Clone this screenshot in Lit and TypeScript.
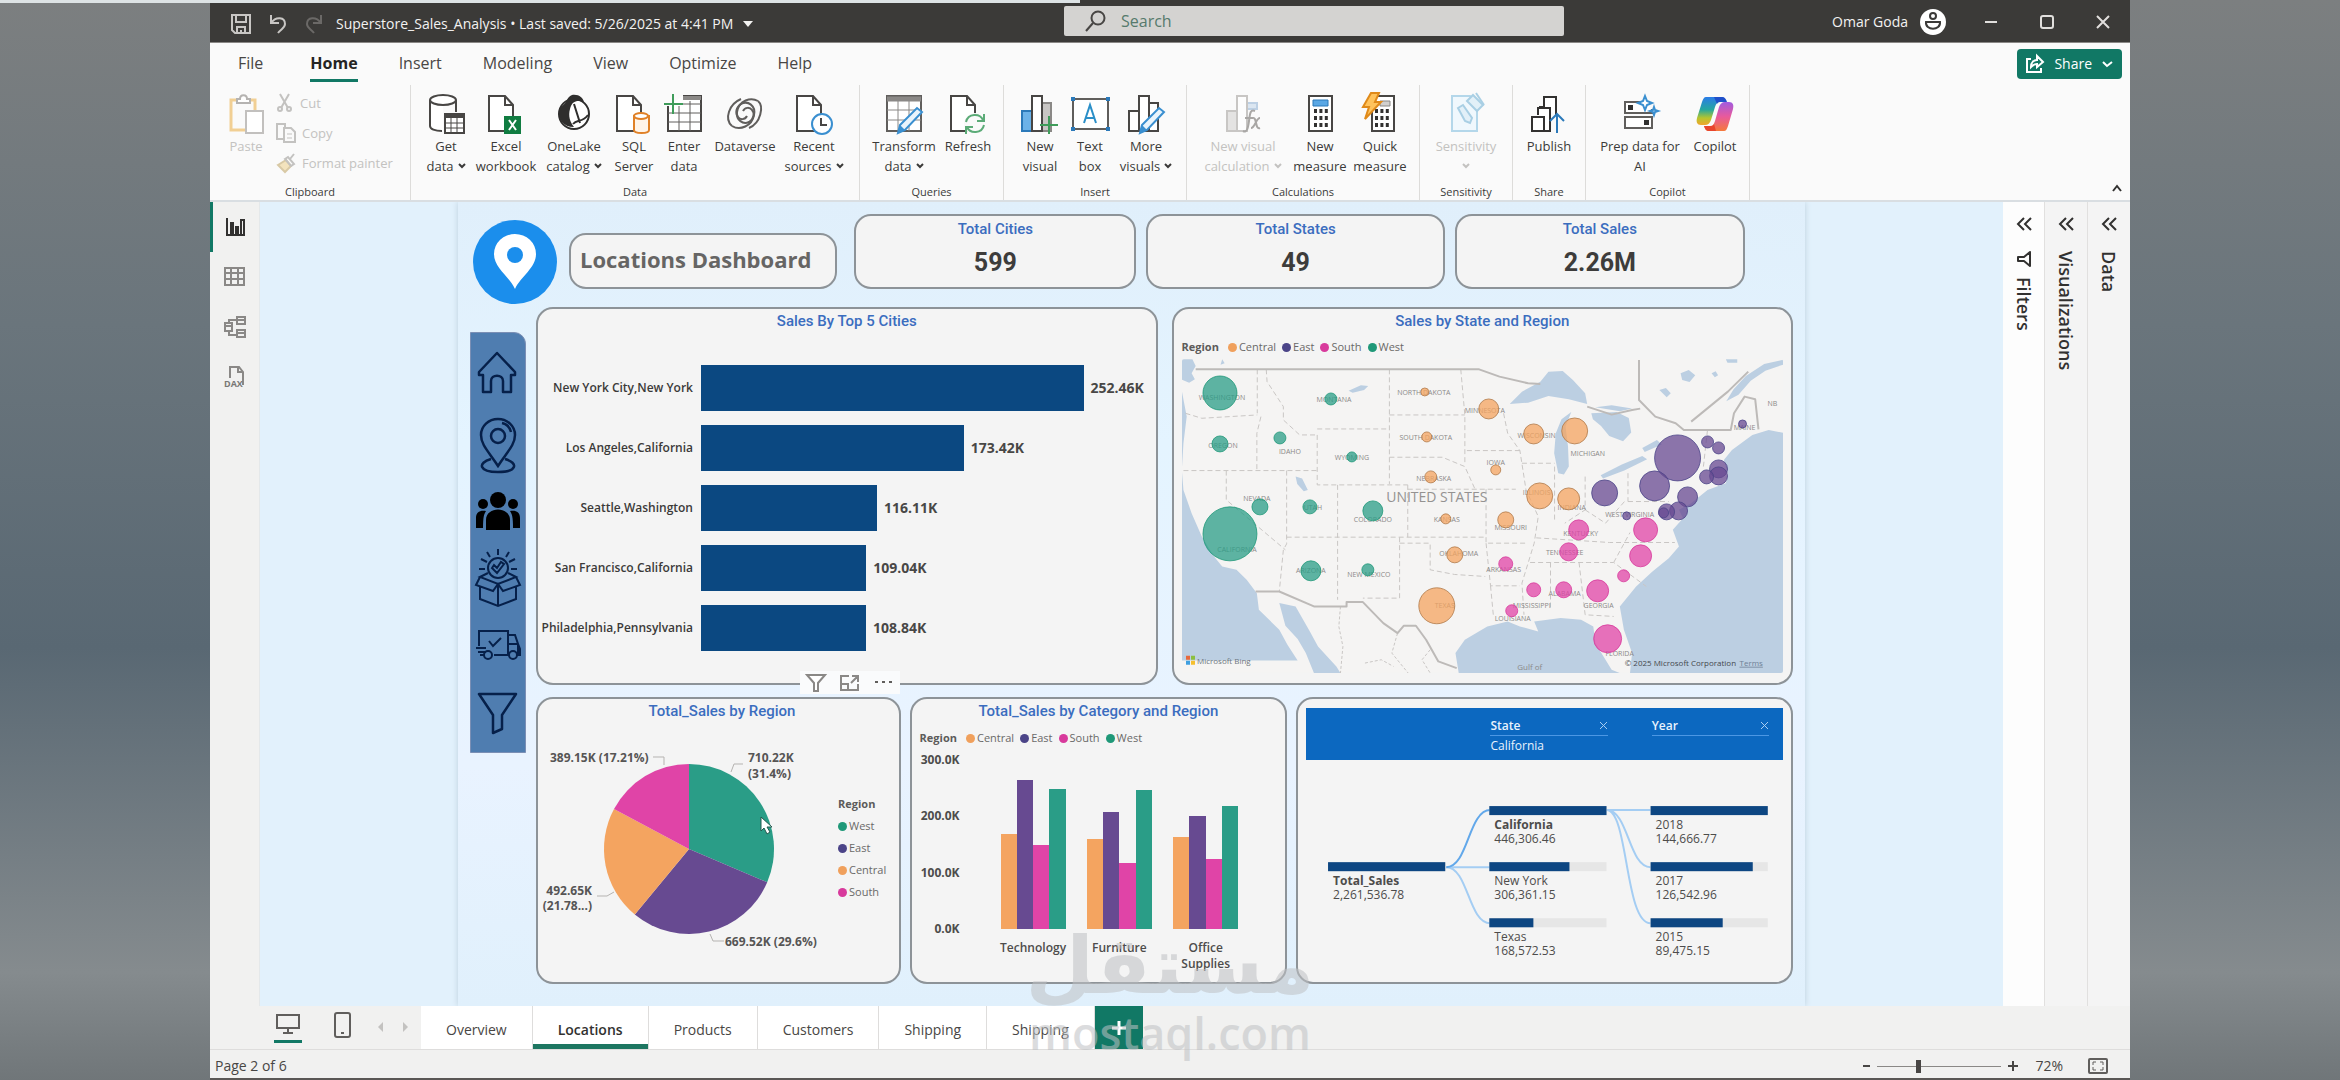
import { LitElement, html, svg, css, type TemplateResult, type SVGTemplateResult } from "lit";
import { customElement } from "lit/decorators.js";
import { classMap } from "lit/directives/class-map.js";

type Art = SVGTemplateResult;
const icon = (w: number, h: number, art: Art | Art[], cls = "") =>
  html`<svg class="ico ${cls}" width=${w} height=${h} viewBox="0 0 ${w} ${h}" aria-hidden="true">${art}</svg>`;

const REGION: Record<string, string> = { Central: "#f4a460", East: "#674a91", South: "#e044a7", West: "#2a9d87" };
const DOT: Record<string, string> = { Central: "#f0a05c", East: "#4b4488", South: "#d83a9c", West: "#1f9878" };

/* ---------- ribbon artwork, 40 x 44 ---------- */
const doc = svg`<path d="M3 4h16l8 9v26H3z" fill="#fff" stroke="#484644" stroke-width="2"/><path d="M19 4v9h8" fill="none" stroke="#484644" stroke-width="2"/>`;
const pencil = svg`<path d="M16 33l17-17 5 4-17 18-7 3z" fill="#e9f4fc" stroke="#3a8fd0" stroke-width="2"/><path d="M16 33l5 5-7 3z" fill="#3a8fd0"/>`;
const art: Record<string, Art> = {
  paste: svg`<path d="M9 8H3v30h14M21 8h6v10" fill="none" stroke="#f1cf94" stroke-width="3"/><path d="M9 11V7h3c0-5 7-5 7 0h3v4z" fill="#fff" stroke="#b5b3b1" stroke-width="2"/><path d="M18 19h17v22H18z" fill="#fff" stroke="#c2c0be" stroke-width="2"/>`,
  getdata: svg`<path d="M4 8v26c0 3 6 5 13 5V8z" fill="#fff"/><ellipse cx="17" cy="8" rx="13" ry="5" fill="#fff" stroke="#484644" stroke-width="2"/><path d="M4 8v26c0 3 5 5 12 5M30 8v12" fill="none" stroke="#484644" stroke-width="2"/><path d="M19 22h19v19H19z" fill="#fff" stroke="#484644" stroke-width="2"/><path d="M19 24h19" stroke="#484644" stroke-width="4"/><path d="M19 31h19M19 36h19M25 26v15M31 26v15" stroke="#484644"/>`,
  excel: svg`${doc}<path d="M18 24h17v18H18z" fill="#107c41"/><path d="M23 28l7 10M30 28l-7 10" stroke="#fff" stroke-width="2"/>`,
  onelake: svg`<circle cx="20" cy="22" r="15" fill="#fff" stroke="#2f2e2d" stroke-width="2"/><path d="M18 3c7-1 11 3 12 7-7-2-12-1-14 7-2 7 0 13 4 18C9 35 4 27 5 19 6 14 12 12 13 8c1-2 2-4 5-5z" fill="#2f2e2d"/><path d="M20 12l6 19M19 32c4-5 9-1 15-9" fill="none" stroke="#2f2e2d" stroke-width="2"/>`,
  sql: svg`${doc}<path d="M20 24v14c0 4 15 4 15 0V24z" fill="#fff4e8" stroke="#e08127" stroke-width="2"/><ellipse cx="27" cy="24" rx="7" ry="3" fill="#fff" stroke="#e08127" stroke-width="2"/>`,
  enter: svg`<path d="M4 14v25h33V4H19" fill="#fff" stroke="#484644" stroke-width="2"/><path d="M19 6h18" stroke="#8a8886" stroke-width="4"/><path d="M4 21h33M4 30h33M15 14v25M26 9v30M19 12h18" stroke="#605e5c"/><path d="M9 2v20M0 12h19" stroke="#3f9c5a" stroke-width="2"/>`,
  dataverse: svg`<g fill="none" stroke="#605e5c" stroke-width="2"><path d="M33 9C26 5 14 8 12 20c-1 8 6 13 12 10 5-3 6-9 3-12-2-3-7-3-9 1"/><path d="M7 34c8 5 20 0 22-11 2-9-6-15-13-11-5 3-6 9-3 13 2 3 7 3 9-1"/><path d="M33 9c6 5 3 22-9 27M7 34C-1 27 4 12 16 7"/></g>`,
  recent: svg`${doc}<circle cx="28" cy="32" r="10" fill="#fff" stroke="#3a8fd0" stroke-width="2"/><path d="M27 26v7h6" fill="none" stroke="#484644" stroke-width="2"/>`,
  transform: svg`<path d="M3 4h34v35H3z" fill="#fff" stroke="#605e5c" stroke-width="2"/><path d="M3 7h34" stroke="#8a8886" stroke-width="5"/><path d="M3 18h34M3 28h34M14 9v30M25 9v30" stroke="#8a8886"/>${pencil}`,
  refresh: svg`${doc}<circle cx="27" cy="32" r="11" fill="#fafafa"/><path d="M18 30c2-9 14-9 17-2M36 22v7h-7M36 33c-2 9-14 9-17 2M18 42v-7h7" fill="none" stroke="#5bab77" stroke-width="2"/>`,
  newvisual: svg`<path d="M2 19h10v20H2z" fill="#6cb2e8" stroke="#2b79b9" stroke-width="2"/><path d="M22 11h9v28h-9z" fill="#c8c6c4" stroke="#8a8886" stroke-width="2"/><path d="M12 4h10v35H12z" fill="#fff" stroke="#484644" stroke-width="2"/><path d="M29 24v18M20 33h18" stroke="#3f9c5a" stroke-width="2"/>`,
  textbox: svg`<path d="M3 7h35v30H3z" fill="#fff" stroke="#605e5c" stroke-width="2"/><path d="M14 31l6-18 6 18M16 26h8" fill="none" stroke="#2b8fc8" stroke-width="2"/><path d="M1 5h4v4H1zM36 5h4v4h-4zM1 35h4v4H1zM36 35h4v4h-4z" fill="#2b79b9"/>`,
  morevisuals: svg`<path d="M3 19h10v20H3zM23 11h9v28h-9z" fill="#fff" stroke="#484644" stroke-width="2"/><path d="M13 4h10v35H13z" fill="#fff" stroke="#484644" stroke-width="2"/>${pencil}`,
  viscalc: svg`<path d="M4 19h10v20H4z" fill="#e4e3e2" stroke="#c8c6c4" stroke-width="2"/><path d="M24 11h10v6H24z" fill="#dbe6f1" stroke="#bdd0e4" stroke-width="2"/><path d="M14 4h10v35H14z" fill="#fdfdfd" stroke="#c8c6c4" stroke-width="2"/><path d="M32 19c-5-2-5 3-6 10s-2 12-6 10M22 26h8M30 26c4-1 2 12 7 10M37 26c-4 0-5 10-9 10" fill="none" stroke="#a9a7a5" stroke-width="2"/>`,
  measure: svg`<path d="M9 4h23v35H9z" fill="#fff" stroke="#484644" stroke-width="2"/><path d="M13 8h15v6H13z" fill="#5aa7e4" stroke="#2b79b9"/><path d="M14 19h14M14 26h14M14 33h14" stroke="#323130" stroke-width="4" stroke-dasharray="3 2.4"/>`,
  quick: svg`<path d="M14 4h20v35H12V14" fill="#fff" stroke="#484644" stroke-width="2"/><path d="M20 9h10v5H20z" fill="#d2d0ce" stroke="#8a8886"/><path d="M15 19h15M15 26h15M15 33h15" stroke="#323130" stroke-width="4" stroke-dasharray="3 2.4"/><path d="M11 1h8l-4 9h6L5 27l4-12H3z" fill="#ffc35c" stroke="#e08a1a" stroke-width="2"/>`,
  sensitivity: svg`<path d="M6 4h18l7 10v25H6z" fill="#f0f8fd" stroke="#b4d7ea" stroke-width="2"/><path d="M12 16l5-3 9 13-2 5-5-2zM21 9l6-6 10 10-6 6z" fill="#e2f0f8" stroke="#a9cfe4" stroke-width="2"/><path d="M30 1l8 12" stroke="#a9cfe4" stroke-width="2"/>`,
  publish: svg`<g fill="#fff" stroke="#323130" stroke-width="2"><path d="M15 15V5h12v18M15 15h-4v8"/><path d="M9 23v-7h12v23H9"/><path d="M3 25h12v14H3z"/></g><path d="M28 41V22M21 29l7-7 7 7" fill="none" stroke="#2b79b9" stroke-width="2"/>`,
  prep: svg`<path d="M22 10H5v11h27v-4" fill="#fff" stroke="#605e5c" stroke-width="2"/><path d="M5 25h27v11H5z" fill="#fff" stroke="#605e5c" stroke-width="2"/><path d="M8 13h5v5H8zM24 28h5v5h-5z" fill="#323130"/><path d="M25 4l2 5 5 2-5 2-2 5-2-5-5-2 5-2zM34 15l1 3 3 1-3 1-1 3-1-3-3-1 3-1z" fill="#fff" stroke="#3a8fd0" stroke-width="2"/>`,
  copilot: svg`<defs><linearGradient id="cpa" x1="0" y1="0" x2="0" y2="1"><stop offset="0" stop-color="#2a7be8"/><stop offset=".45" stop-color="#24a7a0"/><stop offset=".75" stop-color="#b6c52e"/><stop offset="1" stop-color="#f2a52a"/></linearGradient><linearGradient id="cpb" x1="0" y1="0" x2="0" y2="1"><stop offset="0" stop-color="#a05be0"/><stop offset=".5" stop-color="#e85a9c"/><stop offset="1" stop-color="#f5793a"/></linearGradient></defs><path d="M11 5h15c3 0 4 2 5 5h-6c-3 0-4 2-5 5l-4 13c-1 3-3 5-6 5H6c-4 0-5-3-4-7l5-16c1-3 2-5 4-5z" fill="url(#cpa)"/><path d="M29 39H14c-3 0-4-2-5-5h6c3 0 4-2 5-5l4-14c1-3 3-5 6-5h4c4 0 5 3 4 7l-5 17c-1 3-2 5-4 5z" fill="url(#cpb)"/><path d="M19 5h8c3 0 4 2 5 5h-6c-2 0-3 0-4 2z" fill="#1f4fc9"/><path d="M21 39h-7c-3 0-4-2-5-5h6c2 0 3 0 4-2z" fill="#e8452c"/>`,
};

interface Tool { key: string; lines: string[]; w: number; caret?: boolean; off?: boolean }
const GROUPS: { name: string; w: number; tools: Tool[] }[] = [
  { name: "Data", w: 449, tools: [
    { key: "getdata", lines: ["Get", "data"], w: 60, caret: true },
    { key: "excel", lines: ["Excel", "workbook"], w: 60 },
    { key: "onelake", lines: ["OneLake", "catalog"], w: 76, caret: true },
    { key: "sql", lines: ["SQL", "Server"], w: 44 },
    { key: "enter", lines: ["Enter", "data"], w: 56 },
    { key: "dataverse", lines: ["Dataverse"], w: 66 },
    { key: "recent", lines: ["Recent", "sources"], w: 72, caret: true },
  ] },
  { name: "Queries", w: 144, tools: [
    { key: "transform", lines: ["Transform", "data"], w: 78, caret: true },
    { key: "refresh", lines: ["Refresh"], w: 50 },
  ] },
  { name: "Insert", w: 183, tools: [
    { key: "newvisual", lines: ["New", "visual"], w: 62 },
    { key: "textbox", lines: ["Text", "box"], w: 38 },
    { key: "morevisuals", lines: ["More", "visuals"], w: 74, caret: true },
  ] },
  { name: "Calculations", w: 233, tools: [
    { key: "viscalc", lines: ["New visual", "calculation"], w: 102, caret: true, off: true },
    { key: "measure", lines: ["New", "measure"], w: 52 },
    { key: "quick", lines: ["Quick", "measure"], w: 68 },
  ] },
  { name: "Sensitivity", w: 93, tools: [{ key: "sensitivity", lines: ["Sensitivity", ""], w: 82, caret: true, off: true }] },
  { name: "Share", w: 73, tools: [{ key: "publish", lines: ["Publish"], w: 62 }] },
  { name: "Copilot", w: 164, tools: [
    { key: "prep", lines: ["Prep data for", "AI"], w: 98 },
    { key: "copilot", lines: ["Copilot"], w: 52 },
  ] },
];

/* ---------- report data ---------- */
const CITIES: [string, number][] = [
  ["New York City,New York", 252.46],
  ["Los Angeles,California", 173.42],
  ["Seattle,Washington", 116.11],
  ["San Francisco,California", 109.04],
  ["Philadelphia,Pennsylvania", 108.84],
];
const CATEGORIES: { name: string[]; values: number[] }[] = [
  { name: ["Technology"], values: [169, 264, 149, 248] },
  { name: ["Furniture"], values: [160, 207, 117, 246] },
  { name: ["Office", "Supplies"], values: [164, 200, 124, 218] },
];
const PIE: [string, number][] = [["West", 31.4], ["East", 29.6], ["Central", 21.79], ["South", 17.21]];

const mx = (x: number) => Math.round(x / 2.45 - 21);
const my = (y: number) => Math.round(y / 3 - 159);

const BUBBLES: [string, number, number, number][] = [
  ["West", 145, 580, 17], ["West", 417, 598, 6], ["West", 292, 713, 6], ["West", 145, 733, 8],
  ["West", 469, 770, 5], ["West", 242, 920, 8], ["West", 366, 921, 7], ["West", 520, 934, 10],
  ["West", 168, 1001, 27], ["West", 367, 1113, 10], ["West", 506, 1109, 6],
  ["Central", 648, 577, 4], ["Central", 803, 628, 10], ["Central", 652, 711, 5], ["Central", 913, 702, 10],
  ["Central", 1014, 692, 13], ["Central", 661, 831, 6], ["Central", 820, 811, 5], ["Central", 928, 889, 13],
  ["Central", 1000, 897, 11], ["Central", 845, 960, 8], ["Central", 698, 956, 5], ["Central", 720, 1065, 8],
  ["Central", 675, 1217, 18],
  ["South", 1025, 990, 10], ["South", 999, 1056, 9], ["South", 1189, 991, 12], ["South", 1177, 1067, 11],
  ["South", 846, 1091, 7], ["South", 915, 1170, 7], ["South", 987, 1169, 8], ["South", 1071, 1174, 11],
  ["South", 1135, 1128, 6], ["South", 861, 1233, 6], ["South", 1094, 1317, 14],
  ["East", 1425, 672, 4], ["East", 1266, 774, 23], ["East", 1340, 727, 6], ["East", 1367, 743, 6],
  ["East", 1210, 859, 15], ["East", 1089, 878, 13], ["East", 1290, 890, 10], ["East", 1270, 934, 9],
  ["East", 1240, 936, 8], ["East", 1232, 938, 5], ["East", 1142, 948, 4], ["East", 1366, 808, 9],
  ["East", 1368, 828, 9], ["East", 1337, 830, 7],
];
const PLACES: [string, number, number][] = [
  ["WASHINGTON", 150, 592], ["MONTANA", 423, 598], ["NORTH DAKOTA", 645, 577], ["MINNESOTA", 795, 630],
  ["OREGON", 153, 736], ["IDAHO", 315, 754], ["WYOMING", 467, 770], ["SOUTH DAKOTA", 650, 711],
  ["WISCONSIN", 920, 705], ["MICHIGAN", 1047, 758], ["MAINE", 1430, 680], ["NB", 1500, 608],
  ["NEBRASKA", 670, 834], ["IOWA", 820, 787], ["NEVADA", 236, 893], ["UTAH", 372, 920],
  ["COLORADO", 520, 958], ["KANSAS", 700, 958], ["MISSOURI", 858, 980], ["ILLINOIS", 922, 877],
  ["INDIANA", 1006, 920], ["CALIFORNIA", 185, 1048], ["ARIZONA", 367, 1110], ["NEW MEXICO", 510, 1123],
  ["OKLAHOMA", 730, 1060], ["TEXAS", 697, 1215], ["ARKANSAS", 840, 1108], ["LOUISIANA", 862, 1254],
  ["MISSISSIPPI", 910, 1216], ["ALABAMA", 990, 1178], ["GEORGIA", 1073, 1216], ["FLORIDA", 1125, 1358],
  ["TENNESSEE", 990, 1055], ["KENTUCKY", 1030, 1000], ["WEST VIRGINIA", 1150, 942],
];
const WATER =
  "M49 478h28l8 20-10 22 8 18-14 10-20-10zM49 560l14 90-8 80-4 80 4 60 20 70 25 70 30 60 20 30 35 10 25 30 25 40 5 50 50 60 20 45 25 47H49z" +
  "M290 1210l40 10 35 75 20 45 45 60 10 20h-65l-20-60-20-42-30-40z" +
  "M730 1420l-8-60 23-40 55-40 50-15 30 15 45 15-10-30 65-10 50 5 30 20 5 50 20 40 20 40 20 10h25l5-60-20-70-10-70 40-60 40-45 40-40 25-35-15-50 25-35-10-25 30-20 40-40 45-20 5-30-10-40 20-30 50-45 40-15 60 15v725z" +
  "M855 612l30-37 45-30 20-30 35-2 25 27 30 40 5 32-45-14-50-10-50 20z" +
  "M968 700l14-42 24-22-14 44 6 60 2 60-12 24-14-4-10-60z" +
  "M1055 640l62-4 30 18 6 44-20 26-34-16-20-30-20-20zM1065 622l40-6 50 10-30 8z" +
  "M1078 826l52-32 50-26 12 10-56 34-52 24zM1180 744l36-24 12 14-42 22z" +
  "M1530 478l-51 14-45 36-30 40-18 36 30-20 30-42 36-30 48-20zM1274 520l20-10 16 16-14 20-18-6zM1350 520l10-6 6 12-8 6zM1222 570l16-6 12 16-10 12zM460 572l30-16 18 2-10 12-28 8zM330 830l16 6 14 34-10 4-16-22zM150 478l6 12-10 4zM1385 478h28v10h-24z";
const BORDERS =
  "M236 508v132M60 640l40 15 136-10M245 650l-10 50v112M55 812h328M258 508l2 37 40 75v40l40 45h43M383 687h177M383 705v150h222M560 508v344M560 645h185" +
  "M560 772h130l55 28 25 68M605 855v157M605 868h265M433 855v345M308 812v220l-8 18-10 125M308 1012h487M585 1012v183h-90M585 1030h75v80l60 14 75 6M160 812v88l145 150" +
  "M735 508l10 137v150M750 752h130M797 868v162h98M797 1030l11 128h72M808 1158l7 90M840 640l10 60 30 52 15 118 30 80-10 80-30 120 5 95M885 790h80M905 1088h205l80 72" +
  "M920 1014l180 14h160M955 1088v140M1025 1088l15 157 70 5M965 800v160M1040 830v100l-50 40M1145 905h100M1145 820v85M1040 930l50 40 50-70M1110 1088l40-90M1340 690l-10 110";
const COUNTRY =
  "M85 508h695l50 22 70 20 30 2M1045 620l60 24 50-14 20-4M1172 480v120l40 50 50 20 20 20h115l8-50 26-50 26 8 8 90M1300 665l90-90 50-60" +
  "M232 1175h58l85 45h80v-13h40l50 63 35 30 15-22h30l25 42 30 65 45 20";
const MEXICO = "M440 1220l-4 60 10 60-6 80M580 1300l-14 60 20 30 20 30M660 1350l-20 30 20 40M500 1390l40-10 30 20";

/* ---------- report navigation artwork ---------- */
const NAV: { label: string; art: Art; h: number }[] = [
  { label: "Home", h: 70, art: svg`<path d="M4 24L22 5l18 19v3h-4v17h-8V33c0-7-12-7-12 0v11H8V27H4z" fill="none" stroke="#06204a" stroke-width="2.5" stroke-linejoin="round"/>` },
  { label: "Locations", h: 73, art: svg`<g fill="none" stroke="#06204a" stroke-width="2.5"><path d="M23 48C14 34 6 27 6 17a17 16 0 0 1 34 0c0 10-8 17-17 31z"/><circle cx="23" cy="18" r="7"/><path d="M16 41c-14 4-12 13 7 13s21-9 7-13M27 5c5 1 8 5 9 9"/></g>` },
  { label: "Customers", h: 57, art: svg`<g fill="#000"><circle cx="23" cy="9" r="8"/><circle cx="8" cy="13" r="5"/><circle cx="38" cy="13" r="5"/><path d="M11 39V29c0-14 24-14 24 0v10zM1 37V27c0-6 4-8 10-7-2 3-3 6-3 17zM45 37V27c0-6-4-8-10-7 2 3 3 6 3 17z"/></g>` },
  { label: "Products", h: 78, art: svg`<g fill="none" stroke="#06204a" stroke-width="2"><circle cx="23" cy="20" r="10"/><path d="M17 20l5 5 7-9-3-2-4 6-3-3zM23 1v6M12 4l3 5M34 4l-3 5M6 11l6 3M40 11l-6 3M4 21h6M36 21h6"/><path d="M13 25l-8 4 18 7 18-7-8-4M5 29l-4 8 17 6 5-7 5 7 17-6-4-8M5 39v12l18 7 18-7V39M23 36v22"/></g>` },
  { label: "Shipping", h: 64, art: svg`<g fill="none" stroke="#06204a" stroke-width="2"><path d="M4 20V5h29v24H19M33 9h7l3 9v11M33 18h10l2 5v6h-4M1 22h10M3 26h8M5 29h4"/><circle cx="13" cy="29" r="4"/><circle cx="38" cy="29" r="4"/><path d="M14 15l4 5 8-8"/></g>` },
  { label: "Filter", h: 60, art: svg`<path d="M4 4h37L27 25v14l-9 4V25z" fill="none" stroke="#06204a" stroke-width="2.5" stroke-linejoin="round"/>` },
];

@customElement("app-root")
export class AppRoot extends LitElement {
  static styles = css`
    :host { display: flex; min-height: 100vh; box-sizing: border-box; padding: 0 210px; position: relative; overflow: hidden;
      font-family: "Open Sans", "Noto Sans", sans-serif; font-size: 14px; line-height: 20px; color: #3b3a39;
      background: linear-gradient(180deg, #7c7f80 0, #6a757c 30%, #596873 60%, #858b8e 90%, #707679 100%); }
    * { box-sizing: border-box; }
    button, input { font: inherit; color: inherit; border: 0; background: none; padding: 0; margin: 0; }
    button { cursor: pointer; }
    .ico { display: block; flex: none; overflow: visible; }
    .strip { position: absolute; left: 0; top: 0; width: 1080px; height: 3px; background: #dde3e5; }
    .window { flex: 1; min-width: 0; display: flex; flex-direction: column; background: #f1f1f0; border-bottom: 2px solid #5a5755; }

    .titlebar { height: 43px; background: #3b3a38; color: #f3f2f1; display: grid; grid-template-columns: 834fr 500fr 566fr; align-items: center; padding-left: 20px; border-bottom: 1px solid #8a8886; }
    .tleft { display: flex; align-items: center; gap: 16px; padding-top: 5px; }
    .fname { font-size: 14px; white-space: nowrap; display: flex; gap: 10px; align-items: center; margin-left: -4px; }
    .search { height: 30px; background: #d4d3d1; display: flex; align-items: center; gap: 14px; padding-left: 21px; border-radius: 2px; }
    .search input { flex: 1; min-width: 0; font-size: 16px; outline: 0; }
    .search input::placeholder { color: #567a6c; opacity: 1; }
    .tright { display: flex; justify-content: flex-end; align-items: center; padding-top: 2px; }
    .user { display: flex; align-items: center; gap: 12px; font-size: 14px; margin-right: 38px; }
    .winbtns { display: flex; gap: 42px; padding-right: 20px; }

    .ribbon { background: #fafafa; height: 159px; border-bottom: 2px solid #d9dee2; display: flex; flex-direction: column; }
    .menu { height: 42px; display: flex; align-items: center; gap: 41px; padding: 0 8px 0 28px; font-size: 16px; }
    .menu a { color: #484644; text-decoration: none; line-height: 32px; border-bottom: 3px solid transparent; }
    .menu a:first-child { margin-right: 6px; }
    .menu a.on { color: #252423; font-weight: 700; border-color: #117865; }
    .share { margin-left: auto; background: #117865; color: #fff; border-radius: 4px; height: 30px; display: flex; align-items: center; gap: 10px; padding: 0 9px; font-size: 14px; }
    .groups { flex: 1; display: flex; }
    .group { display: flex; flex-direction: column; justify-content: space-between; border-right: 1px solid #dddcda; padding: 7px 0 0 5px; }
    .group .tools { display: flex; align-items: flex-start; }
    .gname { font-size: 11px; line-height: 16px; text-align: center; margin-left: -5px; }
    .tool { flex: none; display: flex; flex-direction: column; align-items: center; white-space: nowrap; font-size: 13px; line-height: 20px; }
    .tool.off, .clip.off { color: #c3c2c0; }
    .clip .gname { color: #3b3a39; }
    .line { display: flex; align-items: center; gap: 4px; min-height: 20px; }
    .clip { width: 201px; }
    .clip .tools { padding-left: 13px; gap: 12px; }
    .small { display: flex; flex-direction: column; gap: 10px; padding-top: 1px; }
    .small button { display: flex; gap: 6px; align-items: center; font-size: 13px; line-height: 20px; color: #c3c2c0; }
    .collapse { margin: auto 8px 8px auto; }

    .main { flex: 1; display: flex; }
    .views { width: 50px; display: flex; flex-direction: column; align-items: center; background: #f1f1f0; border-right: 1px solid #e4e8ea; }
    .views button { width: 100%; height: 50px; display: flex; align-items: center; justify-content: center; }
    .views button.on { border-left: 3px solid #117865; }
    .canvas { flex: 1; min-width: 0; background: #e2f1fc; padding: 0 198px; }
    .page { background: linear-gradient(180deg, #e0effb, #e4f4ff 30%, #e9f3ff 70%, #e0f0fc); box-shadow: 0 0 6px #bccfdd; padding: 12px 12px 22px; min-height: 804px; clip-path: inset(0 -8px); }
    .top { display: grid; grid-template-columns: 84px 277fr 282fr 298fr 290fr; column-gap: 10px; height: 93px; padding: 0 48px 0 3px; }
    .pin { margin-top: 6px; display: block; }
    .box { background: #f4f4f4; border: 2px solid #8d9398; border-radius: 17px; }
    .name { margin: 19px 7px 0 2px; height: 56px; display: flex; align-items: center; padding: 0 0 4px 9px; font: 700 22px/30px "Open Sans", sans-serif; color: #666564; white-space: nowrap; }
    .kpi { height: 75px; text-align: center; padding-top: 3px; }
    .kpi h2, .card h2 { margin: 0; font: 500 15px/20px Roboto, sans-serif; color: #3b6dbf; text-align: center; }
    .kpi p { margin: 10px 0 0; font: 700 25px/28px Roboto, sans-serif; color: #3d3c3b; }
    .body { display: flex; gap: 10px; }
    .nav { width: 56px; height: 421px; margin-top: 25px; background: #4f7db0; border: 1px solid #7b8fb5; border-radius: 0 12px 0 0; display: flex; flex-direction: column; align-items: center; padding-top: 15px; }
    .nav a { display: flex; align-items: flex-start; }
    .cards { flex: 1; min-width: 0; display: grid; row-gap: 12px; grid-template-rows: 378px 287px; }
    .row1 { display: grid; grid-template-columns: 1fr 1fr; gap: 14px; }
    .row2 { display: grid; grid-template-columns: 364fr 377fr 496fr; gap: 9px; }
    .card { position: relative; min-width: 0; padding: 2px 8px; }

    .bars { display: grid; row-gap: 14px; margin: 34px 2px 0 0; }
    .bar { display: grid; grid-template-columns: 147px 382fr 60px; column-gap: 8px; align-items: center; font-weight: 600; font-size: 12px; }
    .bar > span { justify-self: end; white-space: nowrap; }
    .track { grid-column: 2 / 4; display: flex; align-items: center; gap: 7px; padding-right: 62px; }
    .fill { flex: none; height: 46px; background: #0b4881; }
    .bar b { font-size: 14px; font-weight: 700; color: #484746; }
    .hover { position: absolute; left: 262px; bottom: -11px; display: flex; height: 23px; gap: 14px; padding: 0 6px; background: #fafbfc; align-items: center; }

    .legend { display: flex; gap: 6px; align-items: center; font-size: 11px; line-height: 18px; color: #6a6968; list-style: none; margin: 0; padding: 0; }
    .legend b { color: #5c5b5a; margin-right: 3px; }
    .legend li { display: flex; align-items: center; gap: 2px; }
    .dot { width: 9px; height: 9px; border-radius: 50%; }
    .maplegend { margin: 7px 0 3px; }
    .map { display: block; width: 100%; border-radius: 2px; }
    .chart { display: block; width: 100%; overflow: visible; }

    .pie { display: grid; grid-template-columns: 1fr 60px; padding: 2px 8px; grid-template-rows: 20px 1fr; }
    .pie h2 { grid-column: 1 / 3; }
    .pie .chart { width: 292px; }
    .pie .legend { flex-direction: column; align-items: flex-start; gap: 4px; padding-top: 74px; }
    .pie .legend b { margin: 0; }
    .cursor { position: absolute; left: 222px; top: 118px; }

    .cols { display: grid; grid-template-columns: 40px 1fr; margin-top: 3px; font-weight: 700; font-size: 12px; color: #4d4c4b; padding-right: 8px; }
    .ylab { display: flex; flex-direction: column; justify-content: space-between; text-align: right; height: 189px; line-height: 20px; }
    .plot { height: 169px; margin: 10px 31px 0 41px; display: flex; justify-content: space-between; }
    .cluster { width: 65px; height: 169px; display: flex; flex-direction: column; }
    .cluster .stack { flex: none; height: 169px; display: flex; align-items: flex-end; }
    .cluster .stack i { flex: 1; }
    .cluster .cat { display: flex; flex-direction: column; align-items: center; line-height: 16px; padding-top: 11px; font-weight: 600; }
    .catlegend { margin: 8px 0 0; }

    .tree { padding: 9px 8px 0; }
    .levels { height: 52px; background: #0c68c0; color: #eaf3fd; display: grid; grid-template-columns: 117fr 117fr 117fr; column-gap: 44px; padding: 8px 14px 0 23px; font-size: 12px; }
    .level { font-weight: 600; line-height: 19px; }
    .level div { display: flex; justify-content: space-between; align-items: center; border-bottom: 1px solid #4c97e4; }
    .level span { font-weight: 400; }

    .pane { width: 43px; background: #fdfdfd; display: flex; flex-direction: column; align-items: center; gap: 20px; padding-top: 15px; border-right: 1px solid #e1e0df; }
    .pane.alt { background: #f4f4f4; }
    .pane span { writing-mode: vertical-rl; font-weight: 600; font-size: 18px; line-height: 22px; color: #323130; }
    .pane.filters { width: 42px; }
    .pane.filters span { margin-top: -10px; }
    .pane:last-child { border: 0; width: 42px; }

    .sheets { display: flex; height: 44px; border-bottom: 1px solid #dedddc; }
    .modes { width: 211px; display: flex; align-items: flex-start; padding-left: 64px; }
    .modes button { display: flex; }
    .modes .desk { border-bottom: 3px solid #117865; padding: 8px 0 6px; }
    .modes .phone { margin: 6px 0 0 32px; }
    .modes .arr { margin-top: 16px; }
    .modes .arr.l { margin-left: 26px; }
    .modes .arr.r { margin-left: 20px; }
    .sheet { background: #fff; border: 0 solid #dedddc; border-right-width: 1px; padding: 4px 25px 0; font-size: 14px; color: #484644; text-decoration: none; display: flex; align-items: center; justify-content: center; }
    .sheet.on { box-shadow: inset 0 -5px 0 #1d7661; font-weight: 600; color: #323130; }
    .add { width: 48px; background: #117865; display: flex; align-items: center; justify-content: center; }
    .status { height: 28px; display: flex; align-items: center; padding: 4px 22px 0 5px; font-size: 14px; gap: 9px; color: #484644; }
    .status .right { margin-left: auto; display: flex; align-items: center; gap: 7px; }
    .status input { -webkit-appearance: none; appearance: none; width: 124px; height: 14px; background: linear-gradient(#8a8886, #8a8886) center / 100% 1px no-repeat; }
    .status input::-webkit-slider-thumb { -webkit-appearance: none; width: 5px; height: 13px; background: #484644; }
    .pct { margin: 0 18px 0 10px; }

    .mark { position: absolute; left: 50%; top: 923px; transform: translateX(-50%); width: 284px; pointer-events: none; color: #bfc1c4; opacity: 0.55; display: flex; flex-direction: column; align-items: center; }
    .mark .ar { font: 700 79px/86px "DejaVu Sans", sans-serif; white-space: nowrap; }
    .mark .en { font: 600 45px/48px "Open Sans", sans-serif; white-space: nowrap; }
  `;

  private caret = icon(8, 6, svg`<path d="M1 1l3 3 3-3" fill="none" stroke="currentColor" stroke-width="2"/>`);

  private tool(t: Tool): TemplateResult {
    const last = t.lines.length - 1;
    return html`<button class=${classMap({ tool: true, off: !!t.off })} style="width:${t.w}px" ?disabled=${t.off}>
      ${icon(40, 44, art[t.key])}
      ${t.lines.map((l, i) => html`<span class="line">${l}${t.caret && i === last ? this.caret : ""}</span>`)}
    </button>`;
  }

  private legend(cls: string, names: string[]) {
    return html`<ul class="legend ${cls}"><li><b>Region</b></li>
      ${names.map((n) => html`<li><span class="dot" style="background:${DOT[n]}"></span>${n}</li>`)}</ul>`;
  }

  private titlebar() {
    return html`<header class="titlebar">
      <div class="tleft">
        <button aria-label="Save">${icon(22, 22, svg`<path d="M2 2h18v18H5l-3-3zM6 2v7h10V2M7 20v-6h8v6M11 17v3" fill="none" stroke="#c8c6c4" stroke-width="2"/>`)}</button>
        <button aria-label="Undo">${icon(20, 22, svg`<path d="M3 2v8h8M3 10c5-7 14-6 14 1 0 4-4 5-7 9" fill="none" stroke="#c8c6c4" stroke-width="2"/>`)}</button>
        <button aria-label="Redo">${icon(20, 22, svg`<path d="M17 2v8H9M17 10C12 3 3 4 3 11c0 4 4 5 7 9" fill="none" stroke="#6b6967" stroke-width="2"/>`)}</button>
        <span class="fname">Superstore_Sales_Analysis • Last saved: 5/26/2025 at 4:41 PM ${icon(10, 6, svg`<path d="M0 0h10L5 6z" fill="#f3f2f1"/>`)}</span>
      </div>
      <label class="search">${icon(22, 22, svg`<circle cx="13" cy="8" r="6.5" fill="none" stroke="#484644" stroke-width="2"/><path d="M8 13l-7 8" stroke="#484644" stroke-width="2"/>`)}<input type="text" placeholder="Search" aria-label="Search"></label>
      <div class="tright">
        <span class="user">Omar Goda ${icon(26, 26, svg`<circle cx="13" cy="13" r="13" fill="#fff"/><circle cx="13" cy="7" r="3" fill="none" stroke="#3b3a38" stroke-width="2"/><path d="M6 13h14c1 9-15 9-14 0z" fill="none" stroke="#3b3a38" stroke-width="2"/>`)}</span>
        <span class="winbtns">
          <button aria-label="Minimize">${icon(14, 14, svg`<path d="M1 7h12" stroke="#e1dfdd" stroke-width="2"/>`)}</button>
          <button aria-label="Maximize">${icon(14, 14, svg`<rect x="1" y="1" width="12" height="12" rx="2" fill="none" stroke="#e1dfdd" stroke-width="2"/>`)}</button>
          <button aria-label="Close">${icon(14, 14, svg`<path d="M1 1l12 12M13 1L1 13" stroke="#e1dfdd" stroke-width="2"/>`)}</button>
        </span>
      </div>
    </header>`;
  }

  private ribbon() {
    const tabs = ["File", "Home", "Insert", "Modeling", "View", "Optimize", "Help"];
    return html`<div class="ribbon">
      <nav class="menu">
        ${tabs.map((t) => html`<a href="#${t}" class=${classMap({ on: t === "Home" })}>${t}</a>`)}
        <button class="share">${icon(18, 18, svg`<path d="M5 4H1v13h14v-4" fill="none" stroke="#fff" stroke-width="2"/><path d="M5 12c0-5 3-7 6-7V1l6 6-6 5V9c-3 0-4 1-6 3z" fill="none" stroke="#fff" stroke-width="2"/>`)}Share ${icon(11, 7, svg`<path d="M1 1l4 4 5-4" fill="none" stroke="#fff" stroke-width="2"/>`)}</button>
      </nav>
      <div class="groups">
        <section class="group clip off">
          <div class="tools">
            <button class="tool off" disabled>${icon(36, 44, art.paste)}<span class="line">Paste</span></button>
            <div class="small">
              <button disabled>${icon(18, 20, svg`<path d="M4 1l8 14M13 1L5 15" stroke="#c3c2c0" stroke-width="2"/><circle cx="4" cy="16" r="2" fill="none" stroke="#c3c2c0" stroke-width="2"/><circle cx="13" cy="16" r="2" fill="none" stroke="#c3c2c0" stroke-width="2"/>`)}Cut</button>
              <button disabled>${icon(20, 20, svg`<path d="M8 16H1V1h8v4M8 5h7l4 4v10H8z" fill="none" stroke="#c3c2c0" stroke-width="2"/><path d="M11 11h5M11 15h5" stroke="#c3c2c0"/>`)}Copy</button>
              <button disabled>${icon(20, 20, svg`<path d="M2 12l8-5 5 6-6 6z" fill="#f3e3bd" stroke="#d8c9a5" stroke-width="2"/><path d="M9 6l3-2 6 7-3 2zM14 6l4-5" fill="none" stroke="#c3c2c0" stroke-width="2"/>`)}Format painter</button>
            </div>
          </div>
          <div class="gname">Clipboard</div>
        </section>
        ${GROUPS.map((g) => html`<section class="group" style="width:${g.w}px"><div class="tools">${g.tools.map((t) => this.tool(t))}</div><div class="gname">${g.name}</div></section>`)}
        <button class="collapse" aria-label="Collapse ribbon">${icon(10, 8, svg`<path d="M1 7l4-5 4 5" fill="none" stroke="#323130" stroke-width="2"/>`)}</button>
      </div>
    </div>`;
  }

  private cities() {
    const max = CITIES[0][1];
    return html`<section class="card box"><h2>Sales By Top 5 Cities</h2>
      <div class="bars">${CITIES.map(([n, v]) => html`<div class="bar"><span>${n}</span>
        <div class="track"><i class="fill" style="width:${(v / max) * 100}%"></i><b>${v.toFixed(2)}K</b></div></div>`)}</div>
      <div class="hover">
        <button aria-label="Filters on visual">${icon(20, 18, svg`<path d="M1 1h18l-7 8v8H8V9z" fill="#fff" stroke="#8a8886" stroke-width="2"/>`)}</button>
        <button aria-label="Focus mode">${icon(20, 18, svg`<path d="M9 2H1v14h17v-6M12 2h6v6M18 2l-7 7M1 10h7v6" fill="none" stroke="#8a8886" stroke-width="2"/>`)}</button>
        <button aria-label="More options">${icon(20, 18, svg`<path d="M1 8h3M8 8h3M15 8h3" stroke="#605e5c" stroke-width="2"/>`)}</button>
      </div></section>`;
  }

  private map() {
    return html`<section class="card box"><h2>Sales by State and Region</h2>
      ${this.legend("maplegend", ["Central", "East", "South", "West"])}
      <svg class="map" viewBox="0 0 602 314" role="img" aria-label="Sales by State and Region">
        <rect width="602" height="314" fill="#f5f4f3"/>
        <g transform="translate(-21 -159) scale(.40816 .33333)" fill="none" stroke-linejoin="round">
          <path d=${WATER} fill="#bccfe2"/>
          <g stroke="#c9c6c4"><path d=${BORDERS} vector-effect="non-scaling-stroke" stroke-dasharray="5 3"/><path d=${MEXICO} vector-effect="non-scaling-stroke" stroke-dasharray="3 2"/>
          <path d=${COUNTRY} vector-effect="non-scaling-stroke" stroke="#bdbab8" stroke-width="2"/></g>
        </g>
        <g font-size="7" fill="#8b8988" text-anchor="middle">${PLACES.map(([n, x, y]) => svg`<text x=${mx(x)} y=${my(y) + 3}>${n}</text>`)}
          <text x=${mx(675)} y=${my(890) + 5} font-size="14" fill="#949291">UNITED STATES</text>
          <text x=${mx(905)} y="311" font-size="8">Gulf of</text></g>
        ${BUBBLES.map(([r, x, y, s]) => svg`<circle cx=${mx(x)} cy=${my(y)} r=${s} fill=${REGION[r]} fill-opacity=".75" stroke=${r === "Central" ? "#b07a4a" : DOT[r]} stroke-opacity=".8"/>`)}
        <g><path d="M4 297h4v4H4z" fill="#e8693c"/><path d="M9 297h4v4H9z" fill="#8cbf3f"/><path d="M4 302h4v4H4z" fill="#3f9fe0"/><path d="M9 302h4v4H9z" fill="#f5bf2e"/></g>
        <text x="15" y="305" font-size="8" fill="#6f7680">Microsoft Bing</text>
        <text x="443" y="307" font-size="8" fill="#44484d">© 2025 Microsoft Corporation</text>
        <text x="558" y="307" font-size="8" fill="#6f7f95" text-decoration="underline">Terms</text>
      </svg></section>`;
  }

  private pie() {
    let a = 0;
    const pt = (t: number) => `${(143 + 85 * Math.sin(t)).toFixed(1)} ${(130 - 85 * Math.cos(t)).toFixed(1)}`;
    const slices = PIE.map(([n, v]) => {
      const s = a;
      a += (v / 100) * Math.PI * 2;
      return svg`<path d="M143 130L${pt(s)}A85 85 0 0 1 ${pt(a)}z" fill=${REGION[n]}/>`;
    });
    return html`<section class="card box pie"><h2>Total_Sales by Region</h2>
      <svg class="chart" viewBox="0 2 292 250" role="img" aria-label="Total_Sales by Region">
        ${slices}
        <path d="M107 38h11v8M185 53l3-8h9M51 177h10l7-4M164 215l3 7h11" fill="none" stroke="#b5b3b1"/>
        <g font-size="12" font-weight="700" fill="#565554">
          <text x="4" y="43">389.15K (17.21%)</text><text x="202" y="43">710.22K</text><text x="202" y="59">(31.4%)</text>
          <text x="46" y="176" text-anchor="end">492.65K</text><text x="46" y="191" text-anchor="end">(21.78...)</text><text x="179" y="227">669.52K (29.6%)</text></g>
      </svg>
      ${this.legend("", ["West", "East", "Central", "South"])}
      ${icon(16, 18, svg`<path d="M1 0v14l3-3 3 6 3-2-3-5h5z" fill="#fff" stroke="#23594e"/>`, "cursor")}
    </section>`;
  }

  private columns() {
    const names = ["Central", "East", "South", "West"];
    return html`<section class="card box"><h2>Total_Sales by Category and Region</h2>
      ${this.legend("catlegend", names)}
      <div class="cols"><div class="ylab"><span>300.0K</span><span>200.0K</span><span>100.0K</span><span>0.0K</span></div>
        <div class="plot">${CATEGORIES.map((c) => html`<div class="cluster"><div class="stack">${c.values.map((v, i) => html`<i style="height:${v / 3}%;background:${REGION[names[i]]}"></i>`)}</div>
          <div class="cat">${c.name.map((l) => html`<span>${l}</span>`)}</div></div>`)}</div></div></section>`;
  }

  private tree() {
    const node = (x: number, y: number, w: number, name: string, v: string, b = false) => svg`
      <rect x=${x} y=${y} width="117" height="9" fill="#e6e6e6"/><rect x=${x} y=${y} width=${w} height="9" fill="#0d4682"/>
      <text x=${x + 5} y=${y + 23} font-weight=${b ? 700 : 400}>${name}</text><text x=${x + 5} y=${y + 37}>${v}</text>`;
    const x = icon(9, 9, svg`<path d="M1 1l7 7M8 1L1 8" stroke="#a9cdf2"/>`);
    return html`<section class="card box tree">
      <div class="levels"><div></div>
        <div class="level"><div>State <button aria-label="Remove State">${x}</button></div><span>California</span></div>
        <div class="level"><div>Year <button aria-label="Remove Year">${x}</button></div></div></div>
      <svg class="chart" viewBox="0 0 476 222" role="img" aria-label="Total_Sales decomposition">
        <g fill="none" stroke="#a4cdf3" stroke-width="2"><path d="M140 107h44M140 107c22 0 22 56 44 56M300 50h44M300 50c22 0 22 57 44 57M300 50c22 0 18 113 44 113"/><path d="M140 107c22 0 22-57 44-57" stroke="#62a8ea"/></g>
        <g font-size="12" fill="#4d4c4b">
        ${node(22, 102, 117, "Total_Sales", "2,261,536.78", true)}
        ${node(183, 46, 117, "California", "446,306.46", true)}
        ${node(183, 102, 80, "New York", "306,361.15")}
        ${node(183, 158, 44, "Texas", "168,572.53")}
        ${node(344, 46, 117, "2018", "144,666.77")}
        ${node(344, 102, 102, "2017", "126,542.96")}
        ${node(344, 158, 72, "2015", "89,475.15")}</g>
      </svg></section>`;
  }

  render() {
    const views: [string, Art][] = [
      ["Report view", svg`<path d="M2 2v17h17V4h-3v15M6 19V7h2v12M11 19v-8h2v8" fill="none" stroke="#323130" stroke-width="2"/>`],
      ["Table view", svg`<path d="M1 2h19v17H1zM1 7h19M1 13h19M7 2v17M14 2v17" fill="none" stroke="#8a8886" stroke-width="2"/>`],
      ["Model view", svg`<path d="M1 7h7v8H1zM13 1h8v7h-8zM13 14h8v7h-8zM5 7V4h8M5 15v4h8M1 10h7M13 4h8M13 17h8" fill="none" stroke="#8a8886" stroke-width="2"/>`],
      ["DAX query view", svg`<path d="M6 12V1h9l4 5v13M14 1v5h5" fill="none" stroke="#8a8886" stroke-width="2"/><text x="0" y="21" font-size="9" font-weight="700" fill="#7a7876">DAX</text>`],
    ];
    const chev = icon(16, 14, svg`<path d="M8 1L2 7l6 6M15 1L9 7l6 6" fill="none" stroke="#323130" stroke-width="2"/>`);
    const sheets = ["Overview", "Locations", "Products", "Customers", "Shipping", "Shipping"];
    return html`
      <div class="window">
        ${this.titlebar()} ${this.ribbon()}
        <div class="main">
          <nav class="views">${views.map(([l, a], i) => html`<button class=${classMap({ on: i === 0 })} aria-label=${l}>${icon(22, 22, a)}</button>`)}</nav>
          <main class="canvas"><div class="page">
            <div class="top">
              <svg class="pin" width="84" height="84" viewBox="0 0 84 84" aria-hidden="true"><circle cx="42" cy="42" r="42" fill="#1b8eec"/><path d="M42 69C36 56 21 48 21 34a21 20 0 0 1 42 0c0 14-15 22-21 35z" fill="#fff"/><circle cx="42" cy="35" r="8" fill="#1b8eec"/></svg>
              <div class="name box">Locations Dashboard</div>
              ${[["Total Cities", "599"], ["Total States", "49"], ["Total Sales", "2.26M"]].map(([t, v]) => html`<div class="kpi box"><h2>${t}</h2><p>${v}</p></div>`)}
            </div>
            <div class="body">
              <nav class="nav">${NAV.map((n) => html`<a href="#${n.label}" aria-label=${n.label}>${icon(46, n.h, n.art)}</a>`)}</nav>
              <div class="cards">
                <div class="row1">${this.cities()} ${this.map()}</div>
                <div class="row2">${this.pie()} ${this.columns()} ${this.tree()}</div>
              </div>
            </div>
          </div></main>
          <aside class="pane filters"><button aria-label="Expand Filters">${chev}</button>${icon(16, 16, svg`<path d="M14 1v14L8 10H2V6h6z" fill="none" stroke="#323130" stroke-width="2" stroke-linejoin="round"/>`)}<span>Filters</span></aside>
          <aside class="pane alt"><button aria-label="Expand Visualizations">${chev}</button><span>Visualizations</span></aside>
          <aside class="pane alt"><button aria-label="Expand Data">${chev}</button><span>Data</span></aside>
        </div>
        <div class="sheets">
          <div class="modes">
            <button class="desk" aria-label="Desktop layout">${icon(28, 20, svg`<path d="M3 1h22v13H3zM14 14v4M9 19h10" fill="none" stroke="#605e5c" stroke-width="2"/>`)}</button>
            <button class="phone" aria-label="Mobile layout">${icon(17, 26, svg`<rect x="1" y="1" width="15" height="24" rx="2" fill="none" stroke="#605e5c" stroke-width="2"/><path d="M7 21h3" stroke="#605e5c" stroke-width="2"/>`)}</button>
            <button class="arr l" aria-label="Previous page">${icon(6, 10, svg`<path d="M6 0v10L1 5z" fill="#c3c2c0"/>`)}</button>
            <button class="arr r" aria-label="Next page">${icon(6, 10, svg`<path d="M0 0v10l5-5z" fill="#c3c2c0"/>`)}</button>
          </div>
          ${sheets.map((s) => html`<a href="#${s}" class=${classMap({ sheet: true, on: s === "Locations" })}>${s}</a>`)}
          <button class="add" aria-label="New page">${icon(14, 14, svg`<path d="M7 0v14M0 7h14" stroke="#fff" stroke-width="3"/>`)}</button>
        </div>
        <footer class="status"><span>Page 2 of 6</span>
          <span class="right"><button aria-label="Zoom out">${icon(7, 14, svg`<path d="M0 7h7" stroke="#484644" stroke-width="2"/>`)}</button>
            <input type="range" min="10" max="200" value="72" aria-label="Zoom">
            <button aria-label="Zoom in">${icon(10, 14, svg`<path d="M0 7h10M5 2v10" stroke="#484644" stroke-width="2"/>`)}</button>
            <span class="pct">72%</span>
            <button aria-label="Fit to page">${icon(20, 16, svg`<rect x="1" y="1" width="18" height="14" rx="1" fill="none" stroke="#605e5c" stroke-width="2"/><path d="M5 7V4h3M12 4h3v3M15 9v3h-3M8 12H5V9" fill="none" stroke="#605e5c"/>`)}</button></span>
        </footer>
      </div>
      <div class="strip"></div>
      <div class="mark"><span class="ar" lang="ar">مستقل</span><span class="en">mostaql.com</span></div>
    `;
  }
}
